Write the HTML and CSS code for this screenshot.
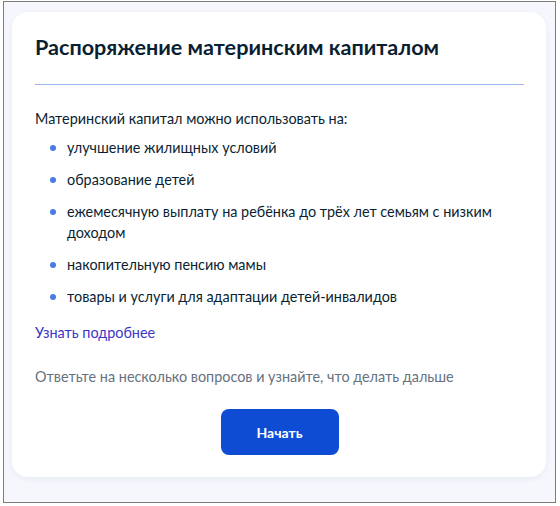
FILE: index.html
```html
<!DOCTYPE html>
<html lang="ru">
<head>
    <meta charset="UTF-8">
    <meta name="viewport" content="width=device-width, initial-scale=1.0">
    <title>Распоряжение материнским капиталом</title>
    <link rel="stylesheet" href="styles.css">
</head>
<body>
    <div class="frame">
        <div class="card">
            <h1 class="card-title">Распоряжение материнским капиталом</h1>
            <div class="divider"></div>

            <p class="intro">Материнский капитал можно использовать на:</p>
            <ul class="uses">
                <li>улучшение жилищных условий</li>
                <li>образование детей</li>
                <li>ежемесячную выплату на ребёнка до трёх лет семьям с низким доходом</li>
                <li>накопительную пенсию мамы</li>
                <li>товары и услуги для адаптации детей-инвалидов</li>
            </ul>

            <a class="more-link" href="#">Узнать подробнее</a>

            <p class="hint">Ответьте на несколько вопросов и узнайте, что делать дальше</p>

            <div class="actions">
                <button type="button" class="start-btn">Начать</button>
            </div>
        </div>
    </div>
</body>
</html>
```

FILE: styles.css
```css
* {
    box-sizing: border-box;
}

body {
    margin: 0;
    font-family: Lato, "Noto Sans", sans-serif;
    color: #0b1f33;
    background-color: #fff;
}

.frame {
    margin: 1px 4px 3px 3px;
    height: 502px;
    border: 1px solid #7d7d7d;
    background-color: #f5f7fc;
    padding: 10px 9px 24px 8px;
}

.card {
    background-color: #fff;
    border-radius: 16px;
    box-shadow: 0 2px 6px rgba(22, 53, 120, 0.06);
    padding: 21px 22px 22px 23px;
    height: 465px;
}

.card-title {
    margin: 0;
    font-size: 21.6px;
    font-weight: 700;
    line-height: 28px;
}

.divider {
    height: 1px;
    background-color: #9ab6ee;
    margin: 23px 0 23px;
}

.intro {
    margin: 0;
    font-size: 14.4px;
    line-height: 21px;
}

.uses {
    list-style: none;
    margin: 8px 0 0;
    padding: 0 0 0 32px;
}

.uses li {
    position: relative;
    font-size: 14.4px;
    line-height: 21px;
    margin-bottom: 11px;
}

.uses li::before {
    content: "";
    position: absolute;
    left: -17px;
    top: 8px;
    width: 6px;
    height: 6px;
    border-radius: 50%;
    background-color: #4b7be6;
}

.more-link {
    display: inline-block;
    margin-top: 4px;
    font-size: 14.4px;
    line-height: 21px;
    color: #3a37c6;
    text-decoration: none;
}

.hint {
    margin: 23px 0 0;
    font-size: 14.4px;
    line-height: 21px;
    color: #66727f;
}

.actions {
    display: flex;
    justify-content: center;
    margin-top: 22px;
}

.start-btn {
    width: 118px;
    height: 46px;
    border: none;
    border-radius: 8px;
    background-color: #0d4cd3;
    color: #fff;
    font-family: inherit;
    font-size: 14px;
    font-weight: 700;
    cursor: pointer;
}
```
